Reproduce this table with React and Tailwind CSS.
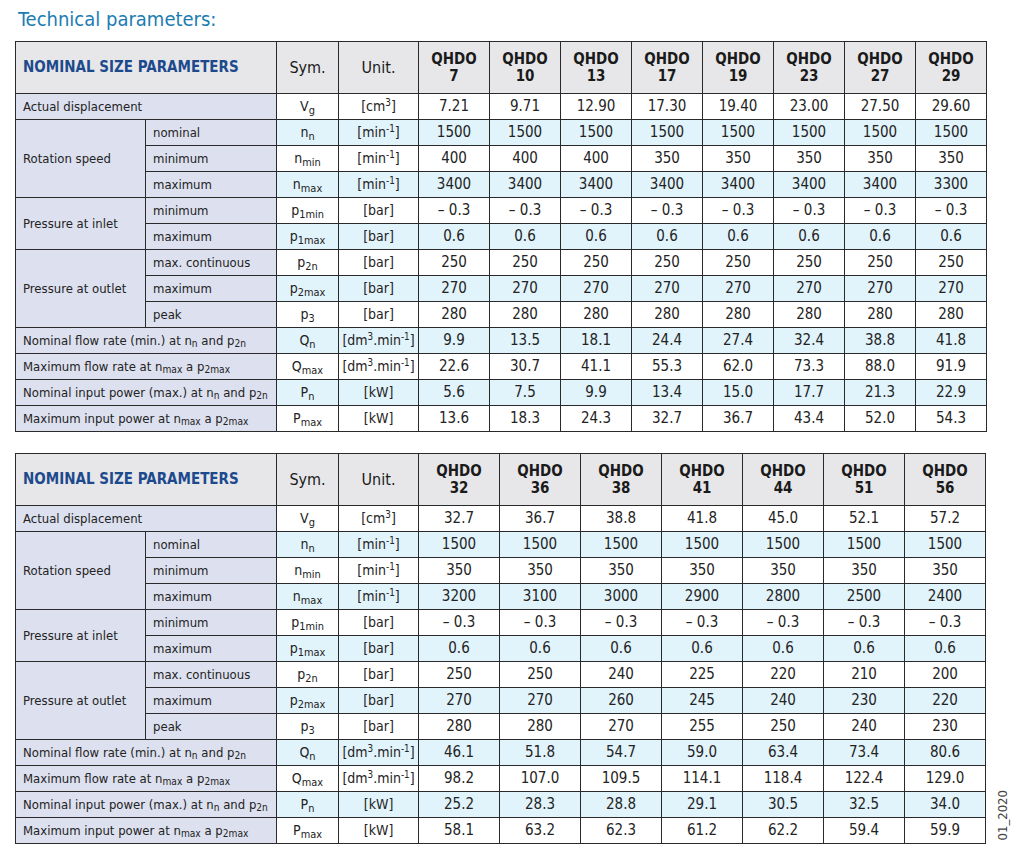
import React from "react";

const S = ({ children }) => <sub className="text-[0.78em]">{children}</sub>;
const Sup = ({ children }) => <sup className="text-[0.7em]">{children}</sup>;

const rowDefs = [
  { label: "Actual displacement", span: 2, sym: <>V<S>g</S></>, unit: <>[cm<Sup>3</Sup>]</> },
  { group: "Rotation speed", gspan: 3, sub: "nominal", sym: <>n<S>n</S></>, unit: <>[min<Sup>-1</Sup>]</> },
  { sub: "minimum", sym: <>n<S>min</S></>, unit: <>[min<Sup>-1</Sup>]</> },
  { sub: "maximum", sym: <>n<S>max</S></>, unit: <>[min<Sup>-1</Sup>]</> },
  { group: "Pressure at inlet", gspan: 2, sub: "minimum", sym: <>p<S>1min</S></>, unit: "[bar]" },
  { sub: "maximum", sym: <>p<S>1max</S></>, unit: "[bar]" },
  { group: "Pressure at outlet", gspan: 3, sub: "max. continuous", sym: <>p<S>2n</S></>, unit: "[bar]" },
  { sub: "maximum", sym: <>p<S>2max</S></>, unit: "[bar]" },
  { sub: "peak", sym: <>p<S>3</S></>, unit: "[bar]" },
  { label: <>Nominal flow rate (min.) at n<S>n</S> and p<S>2n</S></>, span: 2, sym: <>Q<S>n</S></>, unit: <>[dm<Sup>3</Sup>.min<Sup>-1</Sup>]</> },
  { label: <>Maximum flow rate at n<S>max</S> a p<S>2max</S></>, span: 2, sym: <>Q<S>max</S></>, unit: <>[dm<Sup>3</Sup>.min<Sup>-1</Sup>]</> },
  { label: <>Nominal input power (max.) at n<S>n</S> and p<S>2n</S></>, span: 2, sym: <>P<S>n</S></>, unit: "[kW]" },
  { label: <>Maximum input power at n<S>max</S> a p<S>2max</S></>, span: 2, sym: <>P<S>max</S></>, unit: "[kW]" },
];

const t1 = {
  sizes: ["7", "10", "13", "17", "19", "23", "27", "29"],
  data: [
    ["7.21", "9.71", "12.90", "17.30", "19.40", "23.00", "27.50", "29.60"],
    Array(8).fill("1500"),
    ["400", "400", "400", "350", "350", "350", "350", "350"],
    ["3400", "3400", "3400", "3400", "3400", "3400", "3400", "3300"],
    Array(8).fill("– 0.3"),
    Array(8).fill("0.6"),
    Array(8).fill("250"),
    Array(8).fill("270"),
    Array(8).fill("280"),
    ["9.9", "13.5", "18.1", "24.4", "27.4", "32.4", "38.8", "41.8"],
    ["22.6", "30.7", "41.1", "55.3", "62.0", "73.3", "88.0", "91.9"],
    ["5.6", "7.5", "9.9", "13.4", "15.0", "17.7", "21.3", "22.9"],
    ["13.6", "18.3", "24.3", "32.7", "36.7", "43.4", "52.0", "54.3"],
  ],
};

const t2 = {
  sizes: ["32", "36", "38", "41", "44", "51", "56"],
  data: [
    ["32.7", "36.7", "38.8", "41.8", "45.0", "52.1", "57.2"],
    Array(7).fill("1500"),
    Array(7).fill("350"),
    ["3200", "3100", "3000", "2900", "2800", "2500", "2400"],
    Array(7).fill("– 0.3"),
    Array(7).fill("0.6"),
    ["250", "250", "240", "225", "220", "210", "200"],
    ["270", "270", "260", "245", "240", "230", "220"],
    ["280", "280", "270", "255", "250", "240", "230"],
    ["46.1", "51.8", "54.7", "59.0", "63.4", "73.4", "80.6"],
    ["98.2", "107.0", "109.5", "114.1", "118.4", "122.4", "129.0"],
    ["25.2", "28.3", "28.8", "29.1", "30.5", "32.5", "34.0"],
    ["58.1", "63.2", "62.3", "61.2", "62.2", "59.4", "59.9"],
  ],
};

const cell = "border border-[#2a2a2a] p-0 overflow-hidden";
const lav = "bg-[#dde0ef]";

function ParamTable({ sizes, data, colW, tableW }) {
  return (
    <table
      className="border-collapse table-fixed text-[#232323] text-[13px]"
      style={{ width: tableW }}
    >
      <colgroup>
        <col className="w-[130px]" />
        <col className="w-[131px]" />
        <col className="w-[62px]" />
        <col className="w-[80px]" />
        {sizes.map((s) => (
          <col key={s} style={{ width: colW }} />
        ))}
      </colgroup>
      <thead>
        <tr className="h-[52px] bg-[#e7e7e9]">
          <th colSpan={2} className={`${cell} text-left pl-[7px] text-[#1d4a8d] text-[15px] font-bold`}>
            NOMINAL SIZE PARAMETERS
          </th>
          <th className={`${cell} text-[16px] font-normal text-[#1a1a1a]`}>Sym.</th>
          <th className={`${cell} text-[16px] font-normal text-[#1a1a1a]`}>Unit.</th>
          {sizes.map((s) => (
            <th key={s} className={`${cell} text-[15px] font-bold leading-[17px] text-[#1a1a1a]`}>
              QHDO
              <br />
              {s}
            </th>
          ))}
        </tr>
      </thead>
      <tbody>
        {rowDefs.map((r, i) => {
          const bg = i % 2 === 1 ? "bg-[#e1f3fb]" : "bg-white";
          return (
            <tr key={i} className="h-[26px]">
              {r.span && (
                <td colSpan={2} className={`${cell} ${lav} pl-[7px] text-left whitespace-nowrap`}>
                  {r.label}
                </td>
              )}
              {r.group && (
                <td rowSpan={r.gspan} className={`${cell} ${lav} pl-[7px] text-left`}>
                  {r.group}
                </td>
              )}
              {r.sub && <td className={`${cell} ${lav} pl-[7px] text-left whitespace-nowrap`}>{r.sub}</td>}
              <td className={`${cell} ${bg} text-center text-[14px]`}>{r.sym}</td>
              <td className={`${cell} ${bg} text-center text-[14px] whitespace-nowrap`}>{r.unit}</td>
              {data[i].map((v, j) => (
                <td key={j} className={`${cell} ${bg} text-center text-[15px]`}>
                  {v}
                </td>
              ))}
            </tr>
          );
        })}
      </tbody>
    </table>
  );
}

export default function App() {
  return (
    <div className="w-[1019px] h-[855px] bg-white font-['DejaVu_Sans_Condensed','Liberation_Sans',sans-serif]">
      <div className="h-[41px] pl-[18px] pt-[5px] text-[20px] leading-[28px] text-[#1b7cb2]">Technical parameters:</div>
      <div className="pl-[15px] flex">
        <ParamTable sizes={t1.sizes} data={t1.data} colW="71px" tableW="971px" />
      </div>
      <div className="h-[21px]" />
      <div className="pl-[15px] flex items-end">
        <ParamTable sizes={t2.sizes} data={t2.data} colW="81px" tableW="970px" />
        <div className="ml-[7px] mb-[4px] [writing-mode:vertical-rl] rotate-180 text-[13px] text-[#444] leading-normal">
          01_2020
        </div>
      </div>
    </div>
  );
}
